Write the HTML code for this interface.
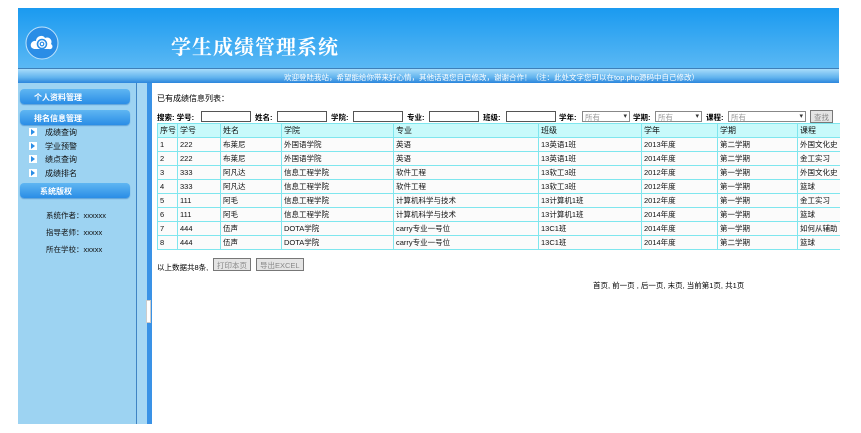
<!DOCTYPE html>
<html><head><meta charset="utf-8"><style>
*{margin:0;padding:0;box-sizing:border-box}
body{width:861px;height:433px;background:#fff;position:relative;overflow:hidden;font-family:"Liberation Sans","Noto Sans CJK SC","WenQuanYi Zen Hei",sans-serif;font-size:8px;color:#000}
.abs{position:absolute}
#hd{left:18px;top:8px;width:821px;height:60px;background:linear-gradient(#1a9af0,#5ab8f4)}
#title{left:171px;top:31px;font-size:20px;color:#fff;font-family:"Noto Serif CJK SC",serif;font-weight:bold;letter-spacing:1px}
#bar{left:18px;top:68px;width:821px;height:15px;background:linear-gradient(#a8dcfa,#62b4ee 60%,#2c86dc);border-top:1px solid #3e7fb8;color:#fff;font-size:7.5px;text-align:right;padding:3px 140px 0 0}
#side{left:18px;top:83px;width:118px;height:341px;background:#9dd3f2}
#line{left:136px;top:83px;width:1px;height:341px;background:#3f84c4}
#strip{left:137px;top:83px;width:10px;height:341px;background:#a6d7f4}
#blue{left:147px;top:83px;width:5px;height:341px;background:#3a92e6}
.btn{position:absolute;left:20px;width:110px;height:15px;border-radius:4px;background:linear-gradient(#5fb6f2,#2a8de6);color:#fff;font-weight:bold;font-size:8px;padding:3px 0 0 14px;box-shadow:0 1px 1px #5a9fd8}
.it{position:absolute;left:29px;font-size:8px;color:#111}
.it:before{content:"";display:inline-block;width:8px;height:8px;background:#fff;margin-right:8px;vertical-align:-1px;position:relative}
.it i{position:absolute;left:2px;top:2px;border-left:4px solid #2a8de6;border-top:3px solid transparent;border-bottom:3px solid transparent}
.inf{position:absolute;left:46px;font-size:7.5px;color:#111}
table{position:absolute;left:157px;top:123px;border-collapse:collapse;width:700px;table-layout:fixed}
td{border:1px solid #7fe6ee;height:14px;font-size:7.5px;padding-left:2px;white-space:nowrap;overflow:hidden;background:#fbfbfb;color:#111}
tr.h td{background:#c8fafb;font-size:8px}
.in{position:absolute;height:11px;border:1px solid #555;background:#fff;top:111px}
.sel{position:absolute;height:11px;border:1px solid #888;background:#fff;top:111px;color:#999;font-size:7.5px;padding-left:2px}
.sel:after{content:"▾";position:absolute;right:2px;top:0;color:#333;font-size:7px}
.lb{position:absolute;top:112px;font-size:7.5px;font-weight:bold}
.b{position:absolute;border:1px solid #777;background:#e4e4e4;color:#888;font-size:7.5px;height:13px;padding:1px 3px}
</style></head><body>
<div id="hd" class="abs"></div>
<svg class="abs" style="left:25px;top:26px" width="34" height="34" viewBox="0 0 34 34"><circle cx="17" cy="17" r="16" fill="#2a8de6" stroke="#bfe3fb" stroke-width="1"/><path d="M7 22c-3-3 0-8 4-7 0-5 7-7 9-3 4-2 8 2 6 6 3 2 1 6-2 5H9z" fill="#fff"/><circle cx="17" cy="18" r="4.5" fill="none" stroke="#2a8de6" stroke-width="1.6"/><circle cx="17" cy="18" r="1.8" fill="none" stroke="#2a8de6" stroke-width="1.2"/></svg>
<div id="title" class="abs">学生成绩管理系统</div>
<div id="bar" class="abs">欢迎登陆我站，希望能给你带来好心情，其他话语您自己修改，谢谢合作！（注：此处文字您可以在top.php源码中自己修改）</div>
<div id="side" class="abs"></div><div id="line" class="abs"></div><div id="strip" class="abs"></div><div id="blue" class="abs"></div>
<div class="abs" style="left:146px;top:300px;width:5px;height:23px;background:#fff;border:1px solid #ccc"></div>
<div class="btn" style="top:89px">个人资料管理</div>
<div class="btn" style="top:110px">排名信息管理</div>
<div class="it" style="top:127px"><i></i>成绩查询</div>
<div class="it" style="top:141px"><i></i>学业预警</div>
<div class="it" style="top:154px"><i></i>绩点查询</div>
<div class="it" style="top:168px"><i></i>成绩排名</div>
<div class="btn" style="top:183px;padding-left:20px">系统版权</div>
<div class="inf" style="top:210px">系统作者：xxxxxx</div>
<div class="inf" style="top:227px">指导老师：xxxxx</div>
<div class="inf" style="top:244px">所在学校：xxxxx</div>
<div class="abs" style="left:157px;top:93px;font-size:8px">已有成绩信息列表：</div>
<div class="lb" style="left:157px">搜索: 学号:</div><div class="in" style="left:201px;width:50px"></div>
<div class="lb" style="left:255px">姓名:</div><div class="in" style="left:277px;width:50px"></div>
<div class="lb" style="left:331px">学院:</div><div class="in" style="left:353px;width:50px"></div>
<div class="lb" style="left:407px">专业:</div><div class="in" style="left:429px;width:50px"></div>
<div class="lb" style="left:483px">班级:</div><div class="in" style="left:506px;width:50px"></div>
<div class="lb" style="left:559px">学年:</div><div class="sel" style="left:582px;width:48px">所有</div>
<div class="lb" style="left:633px">学期:</div><div class="sel" style="left:655px;width:47px">所有</div>
<div class="lb" style="left:706px">课程:</div><div class="sel" style="left:728px;width:78px">所有</div>
<div class="b" style="left:810px;top:110px">查找</div>
<table>
<colgroup><col style="width:20px"><col style="width:43px"><col style="width:61px"><col style="width:112px"><col style="width:145px"><col style="width:103px"><col style="width:76px"><col style="width:80px"><col style="width:60px"></colgroup>
<tr class="h"><td>序号</td><td>学号</td><td>姓名</td><td>学院</td><td>专业</td><td>班级</td><td>学年</td><td>学期</td><td>课程</td></tr>
<tr><td>1</td><td>222</td><td>布莱尼</td><td>外国语学院</td><td>英语</td><td>13英语1班</td><td>2013年度</td><td>第二学期</td><td>外国文化史</td></tr>
<tr><td>2</td><td>222</td><td>布莱尼</td><td>外国语学院</td><td>英语</td><td>13英语1班</td><td>2014年度</td><td>第二学期</td><td>金工实习</td></tr>
<tr><td>3</td><td>333</td><td>阿凡达</td><td>信息工程学院</td><td>软件工程</td><td>13软工3班</td><td>2012年度</td><td>第一学期</td><td>外国文化史</td></tr>
<tr><td>4</td><td>333</td><td>阿凡达</td><td>信息工程学院</td><td>软件工程</td><td>13软工3班</td><td>2012年度</td><td>第一学期</td><td>篮球</td></tr>
<tr><td>5</td><td>111</td><td>阿毛</td><td>信息工程学院</td><td>计算机科学与技术</td><td>13计算机1班</td><td>2012年度</td><td>第一学期</td><td>金工实习</td></tr>
<tr><td>6</td><td>111</td><td>阿毛</td><td>信息工程学院</td><td>计算机科学与技术</td><td>13计算机1班</td><td>2014年度</td><td>第一学期</td><td>篮球</td></tr>
<tr><td>7</td><td>444</td><td>伍声</td><td>DOTA学院</td><td>carry专业一号位</td><td>13C1班</td><td>2014年度</td><td>第一学期</td><td>如何从辅助</td></tr>
<tr><td>8</td><td>444</td><td>伍声</td><td>DOTA学院</td><td>carry专业一号位</td><td>13C1班</td><td>2014年度</td><td>第二学期</td><td>篮球</td></tr>
</table>
<div class="abs" style="left:840px;top:110px;width:21px;height:150px;background:#fff"></div>
<div class="abs" style="left:157px;top:262px;font-size:7.5px">以上数据共8条,</div>
<div class="b" style="left:213px;top:258px">打印本页</div>
<div class="b" style="left:256px;top:258px">导出EXCEL</div>
<div class="abs" style="left:593px;top:280px;font-size:7.5px">首页, 前一页 , 后一页, 末页, 当前第1页, 共1页</div>
</body></html>
